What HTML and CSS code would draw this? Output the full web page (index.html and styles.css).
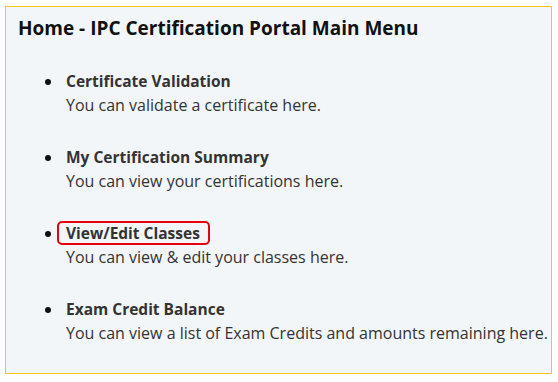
FILE: index.html
```html
<!DOCTYPE html>
<html lang="en">
<head>
    <meta charset="UTF-8">
    <title>Home - IPC Certification Portal Main Menu</title>
    <link rel="stylesheet" href="styles.css">
</head>
<body>

    <div class="panel">
        <h2>Home - IPC Certification Portal Main Menu</h2>
        <ul class="menu">
            <li>
                <a href="#" class="menu-link">Certificate Validation</a>
                <p>You can validate a certificate here.</p>
            </li>
            <li>
                <a href="#" class="menu-link">My Certification Summary</a>
                <p>You can view your certifications here.</p>
            </li>
            <li>
                <a href="#" class="menu-link highlight">View/Edit Classes</a>
                <p>You can view &amp; edit your classes here.</p>
            </li>
            <li>
                <a href="#" class="menu-link">Exam Credit Balance</a>
                <p>You can view a list of Exam Credits and amounts remaining here.</p>
            </li>
        </ul>
    </div>

</body>
</html>
```

FILE: styles.css
```css
body {
    margin: 0;
    padding: 6px 6px 8px 5px;
    background-color: #fff;
    font-family: "Open Sans", "Noto Sans", Arial, sans-serif;
    color: #333;
}
.panel {
    height: 366px;
    border: 1px solid #f5c518;
    background-color: #f3f6f8;
    padding: 0 0 0 12px;
    overflow: hidden;
}
.panel h2 {
    margin: 8px 0 0 0;
    font-size: 19px;
    line-height: 26px;
    font-weight: 700;
    color: #111;
}
.menu {
    margin: 28px 0 0 0;
    padding-left: 48px;
    list-style: none;
}
.menu li {
    position: relative;
    margin-bottom: 28px;
}
.menu li::before {
    content: "";
    position: absolute;
    left: -21px;
    top: 10px;
    width: 6px;
    height: 6px;
    border-radius: 50%;
    background-color: #111;
}
.menu-link {
    display: inline-block;
    position: relative;
    font-size: 15.5px;
    font-weight: 700;
    color: #333;
    text-decoration: none;
    line-height: 24px;
}
.menu p {
    margin: 0;
    font-size: 16px;
    line-height: 24px;
    color: #333;
    white-space: nowrap;
}
/* red call-out box drawn over the link */
.highlight::after {
    content: "";
    position: absolute;
    top: 0;
    bottom: 0;
    left: -9px;
    right: -10px;
    border: 2.5px solid #e8000b;
    border-radius: 5px;
}
```
